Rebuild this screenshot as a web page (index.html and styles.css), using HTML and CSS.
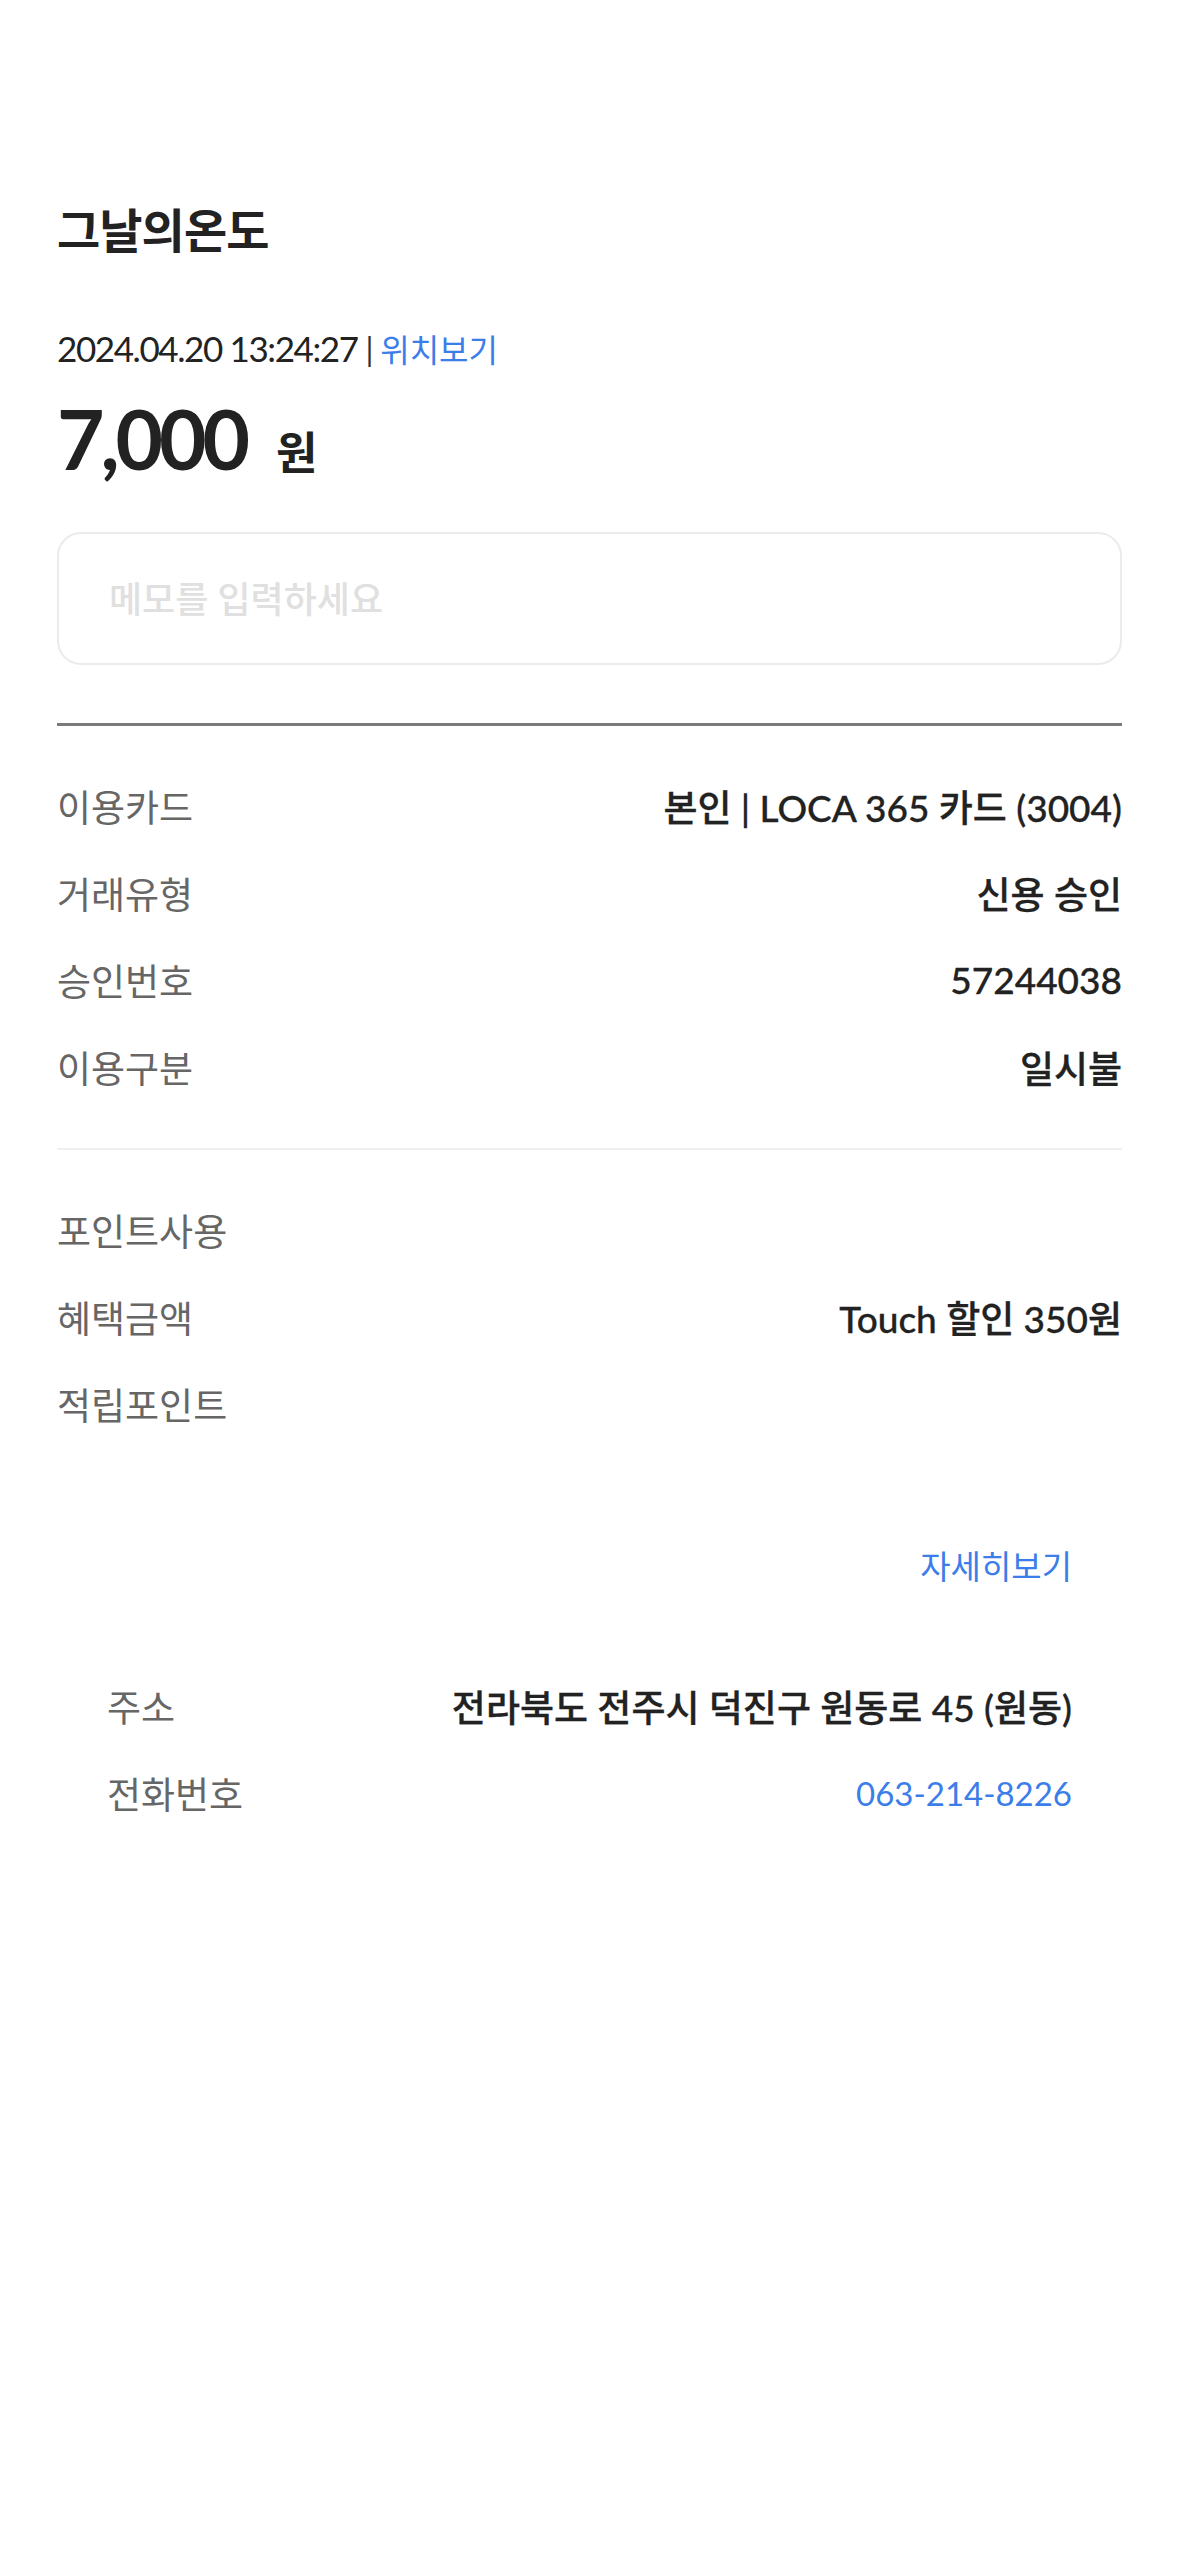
FILE: index.html
```html
<!DOCTYPE html>
<html lang="ko">
<head>
<meta charset="utf-8">
<title>이용내역 상세</title>
<link rel="stylesheet" href="styles.css">
</head>
<body>
<main class="page">
  <h1 class="title">그날의온도</h1>
  <div class="meta">
    <span class="date">2024.04.20 13:24:27</span>
    <span class="sep">|</span>
    <a class="link">위치보기</a>
  </div>
  <div class="amount"><span class="num">7,000</span><span class="unit">원</span></div>
  <div class="memo">
    <input class="memo-input" type="text" placeholder="메모를 입력하세요">
  </div>
  <div class="rule-thick"></div>
  <div class="group">
    <div class="row"><span class="label">이용카드</span><span class="value">본인 | LOCA 365 카드 (3004)</span></div>
    <div class="row"><span class="label">거래유형</span><span class="value">신용 승인</span></div>
    <div class="row"><span class="label">승인번호</span><span class="value">57244038</span></div>
    <div class="row"><span class="label">이용구분</span><span class="value">일시불</span></div>
  </div>
  <div class="rule-thin"></div>
  <div class="group">
    <div class="row"><span class="label">포인트사용</span><span class="value"></span></div>
    <div class="row"><span class="label">혜택금액</span><span class="value">Touch 할인 350원</span></div>
    <div class="row"><span class="label">적립포인트</span><span class="value"></span></div>
  </div>
  <div class="store">
    <div class="more"><a class="link more-link">자세히보기</a></div>
    <div class="row"><span class="label">주소</span><span class="value">전라북도 전주시 덕진구 원동로 45 (원동)</span></div>
    <div class="row"><span class="label">전화번호</span><span class="value phone">063-214-8226</span></div>
  </div>
</main>
</body>
</html>
```

FILE: styles.css
```css
* { box-sizing: border-box; }
html, body { margin: 0; padding: 0; background: #ffffff; }
body {
  font-family: "Lato", "Noto Sans CJK KR", sans-serif;
  color: #222222;
  letter-spacing: 0;
}
.page {
  padding: 200px 57px 0 57px;
  width: 1179px;
}
.title {
  margin: 0;
  font-size: 47px;
  line-height: 60px;
  font-weight: 700;
  letter-spacing: -0.02em;
  color: #222222;
}
.meta {
  margin-top: 64px;
  height: 48px;
  display: flex;
  align-items: center;
  gap: 8px;
  font-size: 35px;
  letter-spacing: -0.04em;
  color: #222222;
}
.sep { color: #333333; font-size: 32px; }
.link { color: #3b7de9; text-decoration: none; cursor: pointer; }
.meta .link { font-size: 32px; letter-spacing: 0; }
.amount {
  margin-top: 21px;
  height: 90px;
  display: flex;
  align-items: baseline;
  gap: 30px;
}
.num {
  font-size: 82px;
  font-weight: 700;
  line-height: 90px;
  letter-spacing: -0.05em;
}
.unit {
  font-size: 45px;
  font-weight: 700;
}
.memo {
  margin-top: 49px;
  height: 133px;
  border: 2px solid #ebebeb;
  border-radius: 24px;
  display: flex;
  align-items: center;
  padding: 0 50px;
}
.memo-input {
  border: 0;
  outline: none;
  width: 100%;
  padding: 0;
  font-family: "Lato", "Noto Sans CJK KR", sans-serif;
  font-size: 36px;
  font-weight: 500;
  letter-spacing: 0;
  color: #222222;
  background: transparent;
}
.memo-input::placeholder { color: #e0e0e0; }
.rule-thick {
  margin-top: 58px;
  height: 3px;
  background: #7a7a7a;
}
.rule-thin {
  height: 2px;
  background: #efefef;
}
.group {
  padding: 36px 0 38px;
}
.row {
  height: 87px;
  display: flex;
  align-items: center;
  justify-content: space-between;
}
.label {
  font-size: 37px;
  color: #666666;
}
.value {
  font-size: 37px;
  font-weight: 500;
  color: #222222;
  -webkit-text-stroke: 0.3px #222222;
}
.store {
  padding: 30px 50px 0 50px;
}
.more {
  display: flex;
  justify-content: flex-end;
  height: 100px;
  align-items: center;
  margin-bottom: 47px;
}
.more-link { font-size: 33px; }
.phone { color: #3b7de9; font-weight: 400; font-size: 33px; -webkit-text-stroke: 0; }
```
